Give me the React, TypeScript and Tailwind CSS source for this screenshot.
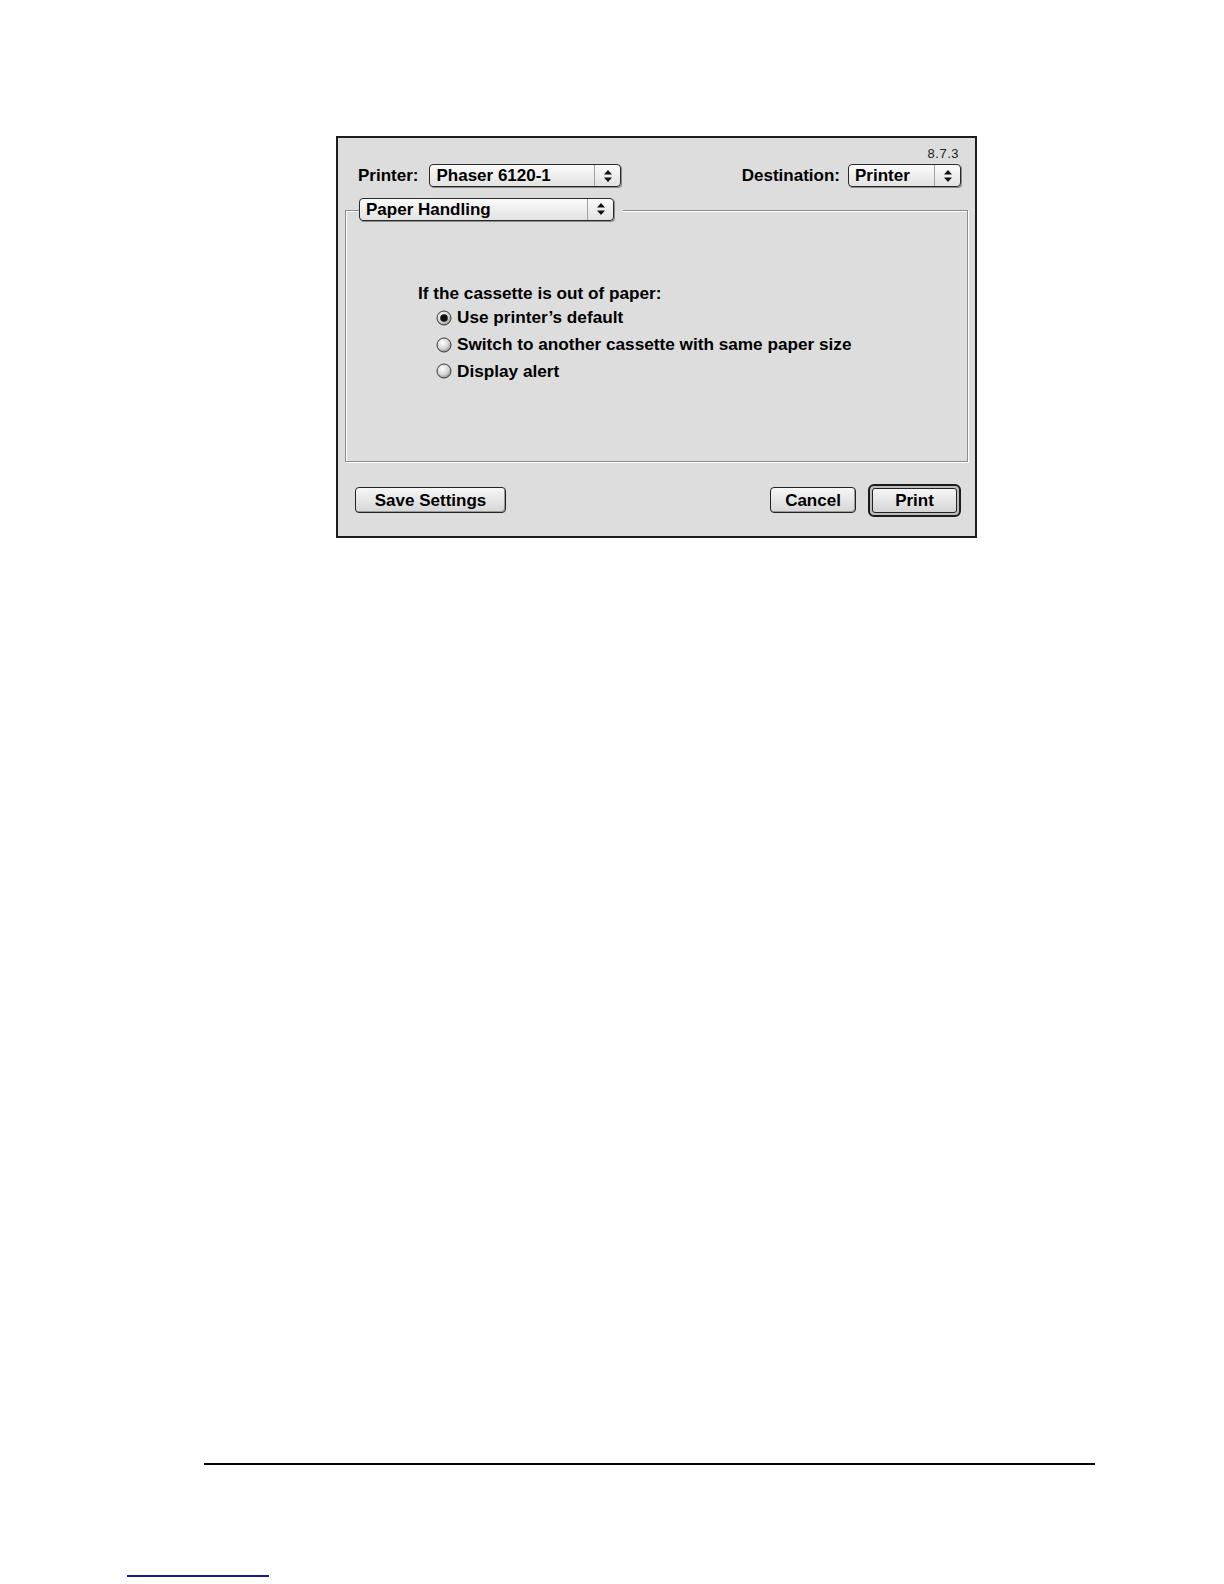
import React from 'react'

const font = { fontFamily: '"Liberation Sans", Arial, sans-serif' }

function Arrows() {
  return (
    <svg width="10" height="14" viewBox="0 0 10 14">
      <path d="M5 1 L9 5.5 L1 5.5 Z" fill="#111" />
      <path d="M1 8.5 L9 8.5 L5 13 Z" fill="#111" />
    </svg>
  )
}

function Popup({ label, width }: { label: string; width: string }) {
  return (
    <div
      className={`${width} h-[23px] flex items-stretch rounded-[4px] border border-[#2a2a2a] bg-gradient-to-b from-[#fbfbfb] to-[#e2e2e2] shadow-[1px_1px_0_#8a8a8a]`}
    >
      <div className="flex-1 flex items-center pl-[6px] text-[17px] font-bold leading-none text-black">
        {label}
      </div>
      <div className="w-[26px] flex items-center justify-center border-l border-[#a0a0a0]">
        <Arrows />
      </div>
    </div>
  )
}

function Radio({ checked }: { checked?: boolean }) {
  const id = checked ? 'rg-on' : 'rg-off'
  return (
    <svg width="16" height="16" viewBox="0 0 16 16">
      <defs>
        <radialGradient id={id} cx="0.4" cy="0.35" r="0.7">
          <stop offset="0" stopColor="#ffffff" />
          <stop offset="0.6" stopColor="#d4d4d4" />
          <stop offset="1" stopColor="#8a8a8a" />
        </radialGradient>
      </defs>
      <circle cx="8" cy="8" r="7" fill={`url(#${id})`} stroke="#3a3a3a" strokeWidth="1" />
      {checked && <circle cx="8" cy="8" r="3.8" fill="#111" />}
    </svg>
  )
}

function Button({ label, width }: { label: string; width: string }) {
  return (
    <div
      className={`${width} h-[26px] flex items-center justify-center rounded-[4px] border border-[#222] bg-gradient-to-b from-[#f6f6f6] to-[#d6d6d6] shadow-[inset_-1px_-1px_0_#9a9a9a] text-[17px] font-bold text-black leading-none`}
    >
      {label}
    </div>
  )
}

export default function App() {
  return (
    <div className="w-[1224px] h-[1584px] bg-white flex flex-col overflow-hidden" style={font}>
      <div className="mt-[136px] ml-[336px] w-[641px] h-[402px] border-2 border-[#1c1c1c] bg-[#dddddd] flex flex-col">
        <div className="pt-[9px] pr-[16px] flex justify-end text-[13px] leading-[13px] tracking-[0.5px] text-[#222]">
          8.7.3
        </div>
        <div className="mt-[3px] pl-[20px] pr-[14px] flex items-center">
          <span className="text-[17px] font-bold text-black mr-[11px]">Printer:</span>
          <Popup label="Phaser 6120-1" width="w-[192px]" />
          <div className="flex-1" />
          <span className="text-[17px] font-bold text-black mr-[8px]">Destination:</span>
          <Popup label="Printer" width="w-[113px]" />
        </div>

        <div className="mt-[9px] ml-[7px] w-[623px] flex flex-col">
          <div className="relative z-10 ml-[14px] self-start pr-[9px] bg-[#dddddd]">
            <Popup label="Paper Handling" width="w-[255px]" />
          </div>
          <div className="-mt-[11px] h-[252px] border border-[#8c8c8c] shadow-[inset_1px_1px_0_#ffffff,1px_1px_0_#ffffff] flex flex-col pl-[72px] pt-[70px]">
            <div className="text-[17.2px] font-bold text-black leading-[24px]">If the cassette is out of paper:</div>
            <div className="ml-[18px] flex flex-col">
              {[
                { t: 'Use printer’s default', c: true },
                { t: 'Switch to another cassette with same paper size' },
                { t: 'Display alert' },
              ].map((r) => (
                <div key={r.t} className="h-[26.8px] flex items-center gap-[5px]">
                  <Radio checked={r.c} />
                  <span className="text-[17.2px] font-bold text-black leading-none">{r.t}</span>
                </div>
              ))}
            </div>
          </div>
        </div>

        <div className="mt-[22px] pl-[17px] pr-[14px] flex items-center">
          <Button label="Save Settings" width="w-[151px]" />
          <div className="flex-1" />
          <Button label="Cancel" width="w-[86px]" />
          <div className="ml-[12px] w-[93px] h-[33px] p-[2px] rounded-[6px] border-2 border-[#1c1c1c] bg-[#bdbdbd] flex">
            <div className="flex-1 flex items-center justify-center rounded-[3px] border border-[#222] bg-gradient-to-b from-[#f6f6f6] to-[#d6d6d6] text-[17px] font-bold text-black leading-none">
              Print
            </div>
          </div>
        </div>
      </div>

      <div className="mt-[925px] ml-[204px] w-[891px] h-[2px] bg-black" />
      <div className="mt-[110px] ml-[127px] w-[142px] h-[2px] bg-[#1a1a8c]" />
    </div>
  )
}
